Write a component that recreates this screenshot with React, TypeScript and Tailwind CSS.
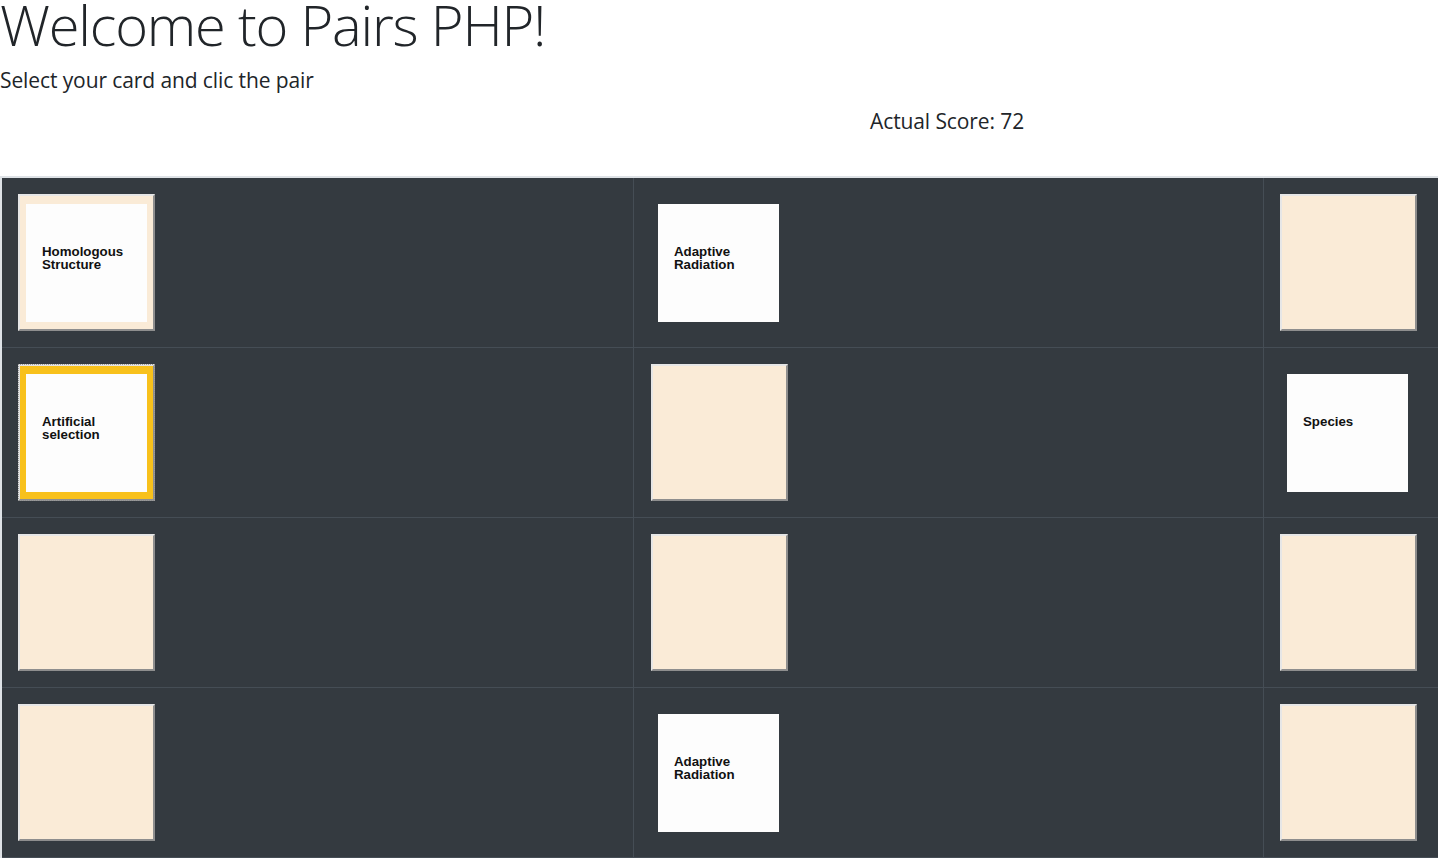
import React from "react"

type Card = { text?: string; state: "hidden" | "open" | "bare" | "selected" }

const rows: Card[][] = [
  [{ text: "Homologous Structure", state: "open" }, { text: "Adaptive Radiation", state: "bare" }, { state: "hidden" }],
  [{ text: "Artificial selection", state: "selected" }, { state: "hidden" }, { text: "Species", state: "bare" }],
  [{ state: "hidden" }, { state: "hidden" }, { state: "hidden" }],
  [{ state: "hidden" }, { text: "Adaptive Radiation", state: "bare" }, { state: "hidden" }],
]

function CardImage({ text }: { text: string }) {
  const lines = text.split(" ")
  return (
    <div className="w-[121px] h-[118px] bg-[#fdfdfd] pl-[16px] pt-[41px] text-left font-['Liberation_Sans',Arial,sans-serif] text-[13.3px] leading-[13px] font-bold text-[#111]">
      {lines.map((l, i) => (
        <div key={i}>{l}</div>
      ))}
    </div>
  )
}

function CardCell({ card }: { card: Card }) {
  if (card.state === "bare") {
    return (
      <div className="w-[137px] h-[137px] pl-[7px] pt-[10px]">
        <CardImage text={card.text!} />
      </div>
    )
  }
  const selected = card.state === "selected"
  return (
    <button
      className={
        selected
          ? "flex items-start justify-start w-[137px] h-[137px] pl-[6px] pt-[8px] border-2 border-t-[#e3e3e3] border-l-[#e3e3e3] border-r-[#8e8e8e] border-b-[#8e8e8e] bg-[#f8c11c] outline outline-1 outline-dotted outline-[#9a9a9a] -outline-offset-1"
          : "flex items-start justify-start w-[137px] h-[137px] pl-[6px] pt-[8px] border-2 border-t-[#e6e6e6] border-l-[#e6e6e6] border-r-[#8e8e8e] border-b-[#8e8e8e] bg-[#faebd7]"
      }
    >
      {card.text && <CardImage text={card.text} />}
    </button>
  )
}

export default function App() {
  return (
    <div className="w-[1438px] h-[862px] overflow-hidden bg-white text-[#212529] font-['Open_Sans',sans-serif]">
      <h1 className="text-[56px] leading-[44px] font-light tracking-[-1.2px] h-[62px] pt-[2px]">Welcome to Pairs PHP!</h1>
      <p className="text-[21px] leading-[30px] font-normal tracking-[-0.1px] h-[40px] pt-[3px]">Select your card and clic the pair</p>
      <div className="pl-[870px] text-[21px] leading-[30px] font-normal tracking-[-0.1px] h-[74px] pt-[4px]">Actual Score: 72</div>
      <div className="w-[1500px] border-t-2 border-l-2 border-[#dee2e6] bg-[#343a40]">
        {rows.map((row, r) => (
          <div key={r} className="flex h-[170px] border-b border-[#454d55]">
            {row.map((card, c) => (
              <div
                key={c}
                className={
                  c === 0
                    ? "w-[632px] p-[16px] border-r border-[#454d55]"
                    : c === 1
                    ? "w-[630px] py-[16px] pl-[17px] border-r border-[#454d55]"
                    : "flex-1 p-[16px]"
                }
              >
                <CardCell card={card} />
              </div>
            ))}
          </div>
        ))}
      </div>
    </div>
  )
}
